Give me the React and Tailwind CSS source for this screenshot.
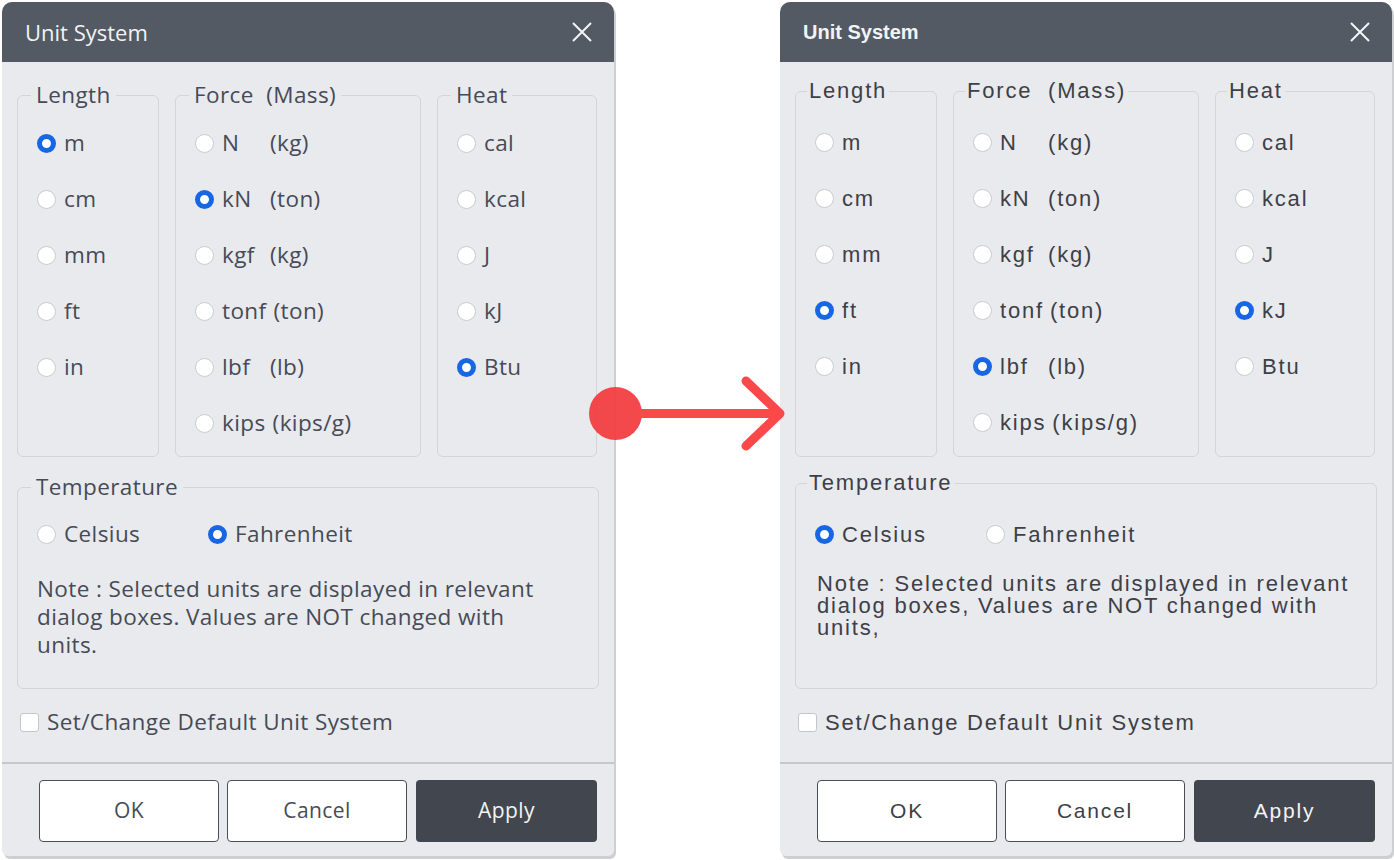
import React from 'react';

const LENGTHS = ['m', 'cm', 'mm', 'ft', 'in'];
const FORCES = [
    ['N', '(kg)'],
    ['kN', '(ton)'],
    ['kgf', '(kg)'],
    ['tonf', '(ton)'],
    ['lbf', '(lb)'],
    ['kips', '(kips/g)'],
];
const HEATS = ['cal', 'kcal', 'J', 'kJ', 'Btu'];

// two looks of the same dialog: modern (left) and legacy (right)
const themes = {
    modern: {
        font: "font-['Open_Sans',sans-serif] text-[22.5px] tracking-[0.4px] text-[#464b56]",
        title: "font-['Open_Sans',sans-serif] text-[22px] tracking-normal text-[#f2f3f5]",
        legend: 'h-[28px] leading-[28px] -mt-[15px] ml-[13px] px-[5px]',
        groupsTop: 'mt-[33px]',
        groupH: 'h-[362px]',
        rowsPt: 'pt-[6px]',
        tempTop: 'mt-[30px]',
        tempH: 'h-[202px]',
        tempPt: 'pt-[5px]',
        unitCol: 'min-w-[48px] pr-[7px]',
        note: 'leading-[28px] mt-[13px] pl-[19px] pr-[36px]',
        button: 'text-[21px]',
    },
    legacy: {
        font: "font-['Liberation_Sans',sans-serif] text-[22px] tracking-[1.8px] text-[#3d4047]",
        title: "font-['Liberation_Sans',sans-serif] text-[20px] font-semibold tracking-normal text-[#f2f3f5]",
        legend: 'h-[24px] leading-[24px] -mt-[13px] ml-[11px] px-[2px]',
        groupsTop: 'mt-[29px]',
        groupH: 'h-[366px]',
        rowsPt: 'pt-[11px]',
        tempTop: 'mt-[26px]',
        tempH: 'h-[206px]',
        tempPt: 'pt-[11px]',
        unitCol: 'min-w-[48px] pr-[6px]',
        note: 'leading-[22px] mt-[11px] pl-[21px] pr-[16px]',
        button: 'text-[21px]',
    },
};

const Radio = ({ checked }) => (
    checked ? (
        <span className="w-[19px] h-[19px] rounded-full border-[5px] border-[#1766e4] bg-white shrink-0"></span>
    ) : (
        <span className="w-[19px] h-[19px] rounded-full border-[1.5px] border-[#c9cbcf] bg-white shrink-0"></span>
    )
);

const Option = ({ checked, children, className = '' }) => (
    <div className={`h-[56px] flex items-center gap-[8px] whitespace-pre ${className}`}>
        <Radio checked={checked} />
        {children}
    </div>
);

const Group = ({ label, theme, className = '', children }) => (
    <div className={`border border-[#d3d5da] rounded-[6px] ${className}`}>
        <div className={`w-fit whitespace-pre bg-[#e9eaee] ${theme.legend}`}>{label}</div>
        {children}
    </div>
);

const UnitDialog = ({ variant, sel }) => {
    const t = themes[variant];

    return (
        <div className={`w-[612px] h-[854px] mt-[2px] bg-[#e9eaee] rounded-t-[10px] rounded-b-[6px] shadow-[2px_3px_0_#cdcfd3] flex flex-col ${t.font}`}>
            <div className="h-[60px] shrink-0 bg-[#535a63] rounded-t-[10px] flex items-center justify-between pl-[23px] pr-[22px]">
                <span className={t.title}>Unit System</span>
                <svg className="w-[20px] h-[20px]" viewBox="0 0 20 20" fill="none" stroke="#f4f5f7" strokeWidth="2">
                    <path d="M1 1L19 19M19 1L1 19" />
                </svg>
            </div>

            <div className={`flex gap-[16px] px-[15px] ${t.groupsTop}`}>
                <Group label="Length" theme={t} className={`w-[142px] ${t.groupH}`}>
                    <div className={`pl-[19px] ${t.rowsPt}`}>
                        {LENGTHS.map((u) => (
                            <Option key={u} checked={sel.length === u}>{u}</Option>
                        ))}
                    </div>
                </Group>
                <Group label="Force  (Mass)" theme={t} className={`w-[246px] ${t.groupH}`}>
                    <div className={`pl-[19px] ${t.rowsPt}`}>
                        {FORCES.map(([u, m]) => (
                            <Option key={u} checked={sel.force === u}>
                                <span className="flex">
                                    <span className={t.unitCol}>{u}</span>
                                    <span>{m}</span>
                                </span>
                            </Option>
                        ))}
                    </div>
                </Group>
                <Group label="Heat" theme={t} className={`w-[160px] ${t.groupH}`}>
                    <div className={`pl-[19px] ${t.rowsPt}`}>
                        {HEATS.map((u) => (
                            <Option key={u} checked={sel.heat === u}>{u}</Option>
                        ))}
                    </div>
                </Group>
            </div>

            <div className={`px-[15px] ${t.tempTop}`}>
                <Group label="Temperature" theme={t} className={t.tempH}>
                    <div className={`flex pl-[19px] ${t.tempPt}`}>
                        <Option checked={sel.temp === 'Celsius'} className="w-[171px]">Celsius</Option>
                        <Option checked={sel.temp === 'Fahrenheit'}>Fahrenheit</Option>
                    </div>
                    <p className={t.note}>
                        {variant === 'modern'
                            ? 'Note : Selected units are displayed in relevant dialog boxes. Values are NOT changed with units.'
                            : 'Note : Selected units are displayed in relevant dialog boxes, Values are NOT changed with units,'}
                    </p>
                </Group>
            </div>

            <div className="flex items-center gap-[8px] pl-[18px] mt-[18px] h-[30px]">
                <span className="w-[19px] h-[19px] rounded-[3px] border-[1.5px] border-[#c3c6ca] bg-white"></span>
                <span>Set/Change Default Unit System</span>
            </div>

            <div className="mt-[25px] h-[2px] bg-[#c4c7cb]"></div>

            <div className={`flex pl-[37px] pt-[16px] ${t.button}`}>
                <button className="w-[180px] h-[62px] shrink-0 bg-white border-[1.5px] border-[#4a4e56] rounded-[4px]">OK</button>
                <button className="w-[180px] h-[62px] shrink-0 ml-[8px] bg-white border-[1.5px] border-[#4a4e56] rounded-[4px]">Cancel</button>
                <button className="w-[181px] h-[62px] shrink-0 ml-[9px] bg-[#42464e] text-[#f2f3f5] rounded-[4px]">Apply</button>
            </div>
        </div>
    );
};

export default function App() {
    return (
        <div className="relative w-[1394px] h-[860px] bg-white flex overflow-hidden">
            <div className="ml-[2px]">
                <UnitDialog variant="modern" sel={{ length: 'm', force: 'kN', heat: 'Btu', temp: 'Fahrenheit' }} />
            </div>
            <div className="ml-[166px]">
                <UnitDialog variant="legacy" sel={{ length: 'ft', force: 'lbf', heat: 'kJ', temp: 'Celsius' }} />
            </div>

            {/* red pointer between the two dialogs */}
            <svg className="absolute left-[580px] top-[370px]" width="220" height="90" viewBox="0 0 220 90" fill="none">
                <circle cx="35.5" cy="43.5" r="26.5" fill="#f23a3e" fillOpacity="0.93" />
                <path d="M60 43.5H200" stroke="#fb4848" strokeWidth="9" />
                <path d="M166 11L200 43.5L166 76" stroke="#fb4848" strokeWidth="9" strokeLinecap="round" strokeLinejoin="round" />
            </svg>
        </div>
    );
}
